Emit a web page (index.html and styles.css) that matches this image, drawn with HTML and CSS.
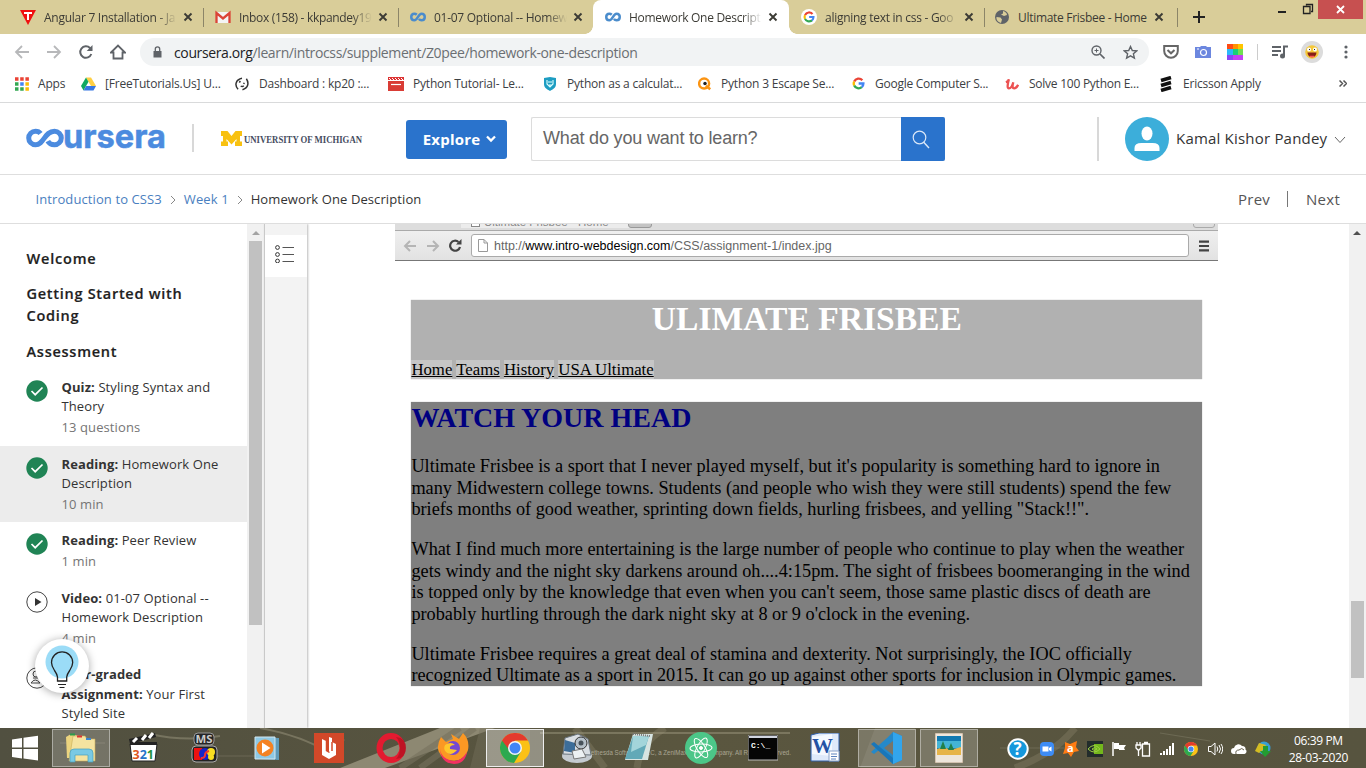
FILE: index.html
```html
<!DOCTYPE html>
<html lang="en">
<head>
<meta charset="utf-8">
<title>Homework One Description | Coursera</title>
<link rel="stylesheet" href="styles.css">
</head>
<body>
<svg class="defs" width="0" height="0">
  <symbol id="close" viewBox="0 0 10 10"><path d="M1.500 1.500l7 7m0-7l-7 7" stroke="#3c3b35" stroke-width="1.900" fill="none"/></symbol>
  <symbol id="loop" viewBox="0 0 32 18"><path d="M13.500 4.500C11.500 2.600 10 2.500 8.800 2.500C5 2.500 2.500 5.400 2.500 9S5 15.500 8.800 15.500C15 15.500 16.500 2.500 23 2.500C26.800 2.500 29.500 5.400 29.500 9S26.800 15.500 23 15.500C20.500 15.500 19 14.600 17.700 13" fill="none" stroke="currentColor" stroke-width="5"/></symbol>
  <symbol id="google" viewBox="0 0 16 16" fill="none" stroke-width="2.900"><path d="M12.700 4A6 6 0 0 0 2.700 5.500" stroke="#ea4335"/><path d="M2.700 5.500a6 6 0 0 0 0 5" stroke="#fbbc05"/><path d="M2.700 10.500a6 6 0 0 0 9.300 2" stroke="#34a853"/><path d="M12 12.500A6 6 0 0 0 14 8H8.200" stroke="#4285f4"/></symbol>
  <symbol id="chrome" viewBox="0 0 30 30"><circle cx="15" cy="15" r="15" fill="#fbc116"/><path d="M2 7.500A15 15 0 0 0 14 30L21 18.500 15 15z" fill="#2da94f"/><path d="M2 7.500A15 15 0 0 1 28 7.500H15L8.500 16z" fill="#e33b2e"/><circle cx="15" cy="15" r="7" fill="#f5f5f5"/><circle cx="15" cy="15" r="5.500" fill="#4285f4"/></symbol>
  <symbol id="done" viewBox="0 0 22 22"><circle cx="11" cy="11" r="10.700" fill="#208455"/><path d="M5.500 11l3.700 3.700L16.500 7.500" fill="none" stroke="#fff" stroke-width="1.700"/></symbol>
</svg>

<div class="tabs">
  <div class="tab"><svg class="fav" viewBox="0 0 16 16"><path d="M0 1h16L8 16z" fill="#f01010"/><path d="M4 4h8M8 4v7" stroke="#fff" stroke-width="2"/></svg><span class="ttl">Angular 7 Installation - Ja</span><svg class="x"><use href="#close"/></svg></div>
  <div class="tab sep"><svg class="fav" viewBox="0 0 16 16"><path d="M1 3h14v11H1z" fill="#f4f4f4"/><path d="M1.500 14V4L8 9.500 14.500 4v10" fill="none" stroke="#db4437" stroke-width="2.300"/></svg><span class="ttl t158">Inbox (158) - kkpandey19</span><svg class="x"><use href="#close"/></svg></div>
  <div class="tab sep"><svg class="fav blue"><use href="#loop"/></svg><span class="ttl">01-07 Optional -- Homew</span><svg class="x"><use href="#close"/></svg></div>
  <div class="tab active"><svg class="fav blue"><use href="#loop"/></svg><span class="ttl">Homework One Descript</span><svg class="x"><use href="#close"/></svg></div>
  <div class="tab"><svg class="fav round"><use href="#google"/></svg><span class="ttl">aligning text in css - Goo</span><svg class="x"><use href="#close"/></svg></div>
  <div class="tab sep last"><svg class="fav" viewBox="0 0 16 16"><circle cx="8" cy="8" r="7" fill="#5f6368"/><path d="M2.500 8l4 .5 1.500 2-1 3.500C4 13 2 11 2.500 8zM9 2c2 .5 4 2 4 4l-3 1-3-1.500 2-1z" fill="#d9cd99"/></svg><span class="ttl full">Ultimate Frisbee - Home</span><svg class="x"><use href="#close"/></svg></div>
  <div class="newtab"><svg width="12" height="12"><path d="M6 0v12M0 6h12" stroke="#222" stroke-width="2"/></svg></div>
  <svg class="winbtns" width="60" height="20"><path d="M4 12h8" stroke="#222" stroke-width="2"/><path d="M32.500 5.500v-1h6v7h-1.500M29.500 6.500h6.500v7h-6.500z" fill="none" stroke="#222" stroke-width="1.300"/></svg>
  <div class="winclose"><svg width="9" height="9"><path d="M1 1l7 7m0-7L1 8" stroke="#fff" stroke-width="1.800"/></svg></div>
</div>

<div class="toolbar">
  <svg class="nav" viewBox="0 0 16 16"><path d="M15 8H2m6-6L2 8l6 6" stroke="#b7b8ba"/></svg>
  <svg class="nav" viewBox="0 0 16 16"><path d="M1 8h13M8 2l6 6-6 6" stroke="#b7b8ba"/></svg>
  <svg class="nav" viewBox="0 0 16 16"><path d="M13.300 10A5.700 5.700 0 1 1 12 4l1.500 2" stroke-width="2"/><path d="M14.500 1v6H8.700z" fill="#5f6368" stroke="none"/></svg>
  <svg class="nav" viewBox="0 0 16 16"><path d="M1 8.500L8 1.500l7 7h-2.500v6h-9v-6z" stroke-width="1.800"/></svg>
  <div class="omni">
    <svg width="9" height="12" viewBox="0 0 9 12"><path d="M.5 5h8v6.500h-8z" fill="#5f6368"/><path d="M2.300 5V3a2.200 2.200 0 0 1 4.400 0v2" fill="none" stroke="#5f6368" stroke-width="1.300"/></svg>
    <span class="url"><b>coursera.org</b>/learn/introcss/supplement/Z0pee/homework-one-description</span>
    <svg class="zm" width="14" height="14" viewBox="0 0 14 14" fill="none" stroke="#5f6368"><circle cx="5.500" cy="5.500" r="4.500" stroke-width="1.400"/><path d="M9 9l4.500 4.500" stroke-width="1.700"/><path d="M3.500 5.500h4m-2-2v4"/></svg>
    <svg width="15" height="15" viewBox="0 0 15 15"><path d="M7.500 1.500l1.800 4 4.400.4-3.300 2.900 1 4.300-3.900-2.300-3.900 2.300 1-4.300L1.300 5.900l4.400-.4z" fill="none" stroke="#5f6368" stroke-width="1.400"/></svg>
  </div>
  <div class="ext">
    <svg width="16" height="16"><path d="M1.200 2h13.600v5a6.800 6.800 0 0 1-13.600 0z" fill="none" stroke="#666" stroke-width="2"/><path d="M4.500 6L8 9.300 11.500 6" fill="none" stroke="#666" stroke-width="2"/></svg>
    <svg width="16" height="16"><path d="M0 3h5l1-1h5l1 1h4v11H0z" fill="#6c87df"/><circle cx="8.500" cy="8.500" r="3" fill="none" stroke="#fff" stroke-width="1.200"/><path d="M2 5h2" stroke="#fff"/></svg>
    <svg width="16" height="16"><path d="M0 0h6v5H0z" fill="#ff4b14"/><path d="M6 0h5v5H6z" fill="#ff9100"/><path d="M11 0h5v5h-5z" fill="#ffc400"/><path d="M0 5h6v6H0z" fill="#2bb8fa"/><path d="M6 5h5v6H6z" fill="#18cf78"/><path d="M11 5h5v6h-5z" fill="#72df52"/><path d="M0 11h6v5H0z" fill="#8947f5"/><path d="M6 11h10v5H6z" fill="#c441f5"/></svg>
    <i class="bar"></i>
    <svg width="16" height="14"><path d="M0 2h9M0 6h9M0 10h6" stroke="#5f6368" stroke-width="1.800"/><path d="M12 11V1.500h4" fill="none" stroke="#5f6368" stroke-width="2"/><circle cx="10.500" cy="11" r="2.500" fill="#5f6368"/></svg>
    <svg class="face" width="22" height="22"><circle cx="11" cy="11" r="11" fill="#dcdcdc"/><circle cx="11" cy="11" r="6.800" fill="#f5c93c"/><circle cx="8" cy="8.500" r="2" fill="#fff"/><circle cx="14" cy="8.500" r="2" fill="#fff"/><path d="M8 8.500h1m4 0h1" stroke="#222"/><path d="M6.500 11.500h9a4.500 4.800 0 0 1-9 0z" fill="#872016"/><path d="M9 15.500h4" stroke="#f55" stroke-width="1.500"/></svg>
    <svg class="dots" width="4" height="14" fill="#5f6368"><circle cx="2" cy="2" r="1.600"/><circle cx="2" cy="7" r="1.600"/><circle cx="2" cy="12" r="1.600"/></svg>
  </div>
</div>

<div class="marks">
  <div class="mark m1"><svg viewBox="0 0 14 14"><path d="M0 2h14" stroke="#ea4335" stroke-width="3.500" stroke-dasharray="3.500 1.700"/><path d="M0 7h3.500" stroke="#34a853" stroke-width="3.500"/><path d="M5.200 7h3.500" stroke="#4285f4" stroke-width="3.500"/><path d="M10.400 7h3.500" stroke="#fbbc05" stroke-width="3.500"/><path d="M0 12h8.700" stroke="#34a853" stroke-width="3.500" stroke-dasharray="3.500 1.700"/><path d="M10.400 12h3.500" stroke="#fbbc05" stroke-width="3.500"/></svg><span>Apps</span></div>
  <div class="mark m2"><svg viewBox="0 0 16 14"><path d="M5.300 0h5.400L16 9h-5.300z" fill="#ffcf43"/><path d="M5.300 0L0 9l2.700 5L8 4.500z" fill="#11a861"/><path d="M2.700 14L5.500 9H16l-2.700 5z" fill="#3777e3"/></svg><span>[FreeTutorials.Us] U...</span></div>
  <div class="mark m3"><svg viewBox="0 0 16 16" fill="none" stroke="#333"><path d="M8 1.500C1 3 -1 9 3.500 14M8.500 14.500c7-2 7.500-8 4.500-12.500" stroke-width="1.700"/><path d="M6 4.500L5 6.500M10.500 6.500l-.5 1.500M6.500 10.500q2 1 3.500-.5" stroke-width="1.700"/></svg><span>Dashboard : kp20 :...</span></div>
  <div class="mark m4"><svg viewBox="0 0 16 16"><path d="M0 1h16v3H0z" fill="#d33"/><path d="M1 2l2 2m1-2l2 2m1-2l2 2m1-2l2 2m1-2l2 2" stroke="#fff"/><path d="M0 5h16v10H0z" fill="#d93c35"/><path d="M3 8.500h10" stroke="#fff" stroke-width="1.200"/></svg><span>Python Tutorial- Le...</span></div>
  <div class="mark m5"><svg viewBox="0 0 12 14"><path d="M0 1l6-1 6 1v6c0 4-3 5-6 7-3-2-6-3-6-7z" fill="#1d9dc2"/><path d="M3 3v4l3 3 3-3V3M4 5h4M5 8h3" fill="none" stroke="#dff" stroke-width="1.100"/></svg><span>Python as a calculat...</span></div>
  <div class="mark m6"><svg viewBox="0 0 16 16"><circle cx="7" cy="7.500" r="5.700" fill="none" stroke="#fb9413" stroke-width="2.800"/><circle cx="8" cy="7.500" r="2" fill="#222"/><path d="M9 10l5 4" stroke="#fb9413" stroke-width="3"/></svg><span>Python 3 Escape Se...</span></div>
  <div class="mark m7"><svg viewBox="0 0 16 16"><use href="#google" width="16" height="16"/></svg><span>Google Computer S...</span></div>
  <div class="mark m8"><svg viewBox="0 0 16 14"><path d="M1 5q3-1 3.500-3.500Q1.500 12 4.500 12T9.500 5Q7.500 12 10.500 12 13 12 15 8" fill="none" stroke="#ec5252" stroke-width="2.600"/></svg><span>Solve 100 Python E...</span></div>
  <div class="mark m9"><svg viewBox="0 0 14 16"><path d="M2 4.500l10-3M2 9.500l10-3M2 14.500l10-3" stroke="#111" stroke-width="3.500"/></svg><span>Ericsson Apply</span></div>
  <svg class="more" width="8" height="7"><path d="M.5.5l3 3-3 3m4-6l3 3-3 3" fill="none" stroke="#555" stroke-width="1.500"/></svg>
</div>

<header class="head">
  <svg class="logo" width="142" height="28"><path d="M14.500 8.500C13.200 6.600 11.800 6.200 9.500 6.200A6.800 6.800 0 0 0 9.500 19.800C18 19.800 18.500 6.200 28.500 6.200A6.800 6.800 0 0 1 28.500 19.800C25 19.800 23 18.500 21.800 16.200" fill="none" stroke="#4c8bdf" stroke-width="5"/><text x="37" y="22.500" textLength="103" lengthAdjust="spacingAndGlyphs">ursera</text></svg>
  <i class="vline a"></i>
  <svg class="mich" width="146" height="20"><path d="M0 2h6.500l4 5 4-5H21v5h-2v5.500h2V17h-7v-4.500h1.500V10l-5 5.500-5-5.500v2.500H7V17H0v-4.500h2V7H0z" fill="#f8c111"/><text x="23" y="13.500" textLength="118" lengthAdjust="spacingAndGlyphs">UNIVERSITY OF MICHIGAN</text></svg>
  <button class="explore">Explore<svg width="10" height="8"><path d="M1 1.500l4 4 4-4" fill="none" stroke="#fff" stroke-width="2.300"/></svg></button>
  <div class="search"><span>What do you want to learn?</span><div class="go"><svg width="18" height="19"><circle cx="7.500" cy="7.500" r="6.300" fill="none" stroke="#dbe8f8" stroke-width="1.200"/><path d="M11.500 12l5.500 6" stroke="#dbe8f8" stroke-width="1.400"/></svg></div></div>
  <i class="vline b"></i>
  <svg class="avatar" width="44" height="44"><circle cx="22" cy="22" r="22" fill="#3caeda"/><ellipse cx="22" cy="16.500" rx="5.500" ry="7" fill="#fff"/><path d="M9.500 34v-3q0-5 7-5h11q7 0 7 5v3z" fill="#fff"/></svg>
  <span class="user">Kamal Kishor Pandey</span>
  <svg class="ucar" width="12" height="8"><path d="M1 1l5 5.500L11 1" fill="none" stroke="#666"/></svg>
</header>

<nav class="crumbs">
  <a class="c1">Introduction to CSS3</a><svg width="6" height="10"><path d="M1 1l4 4-4 4" fill="none" stroke="#888"/></svg><a class="c2">Week 1</a><svg width="6" height="10"><path d="M1 1l4 4-4 4" fill="none" stroke="#888"/></svg><span class="c3">Homework One Description</span>
  <span class="prev">Prev</span><i class="pn"></i><span class="next">Next</span>
</nav>

<main class="main">
  <aside class="side">
    <h3>Welcome</h3><h3>Getting Started with<br>Coding</h3><h3>Assessment</h3>
    <div class="item"><svg class="st"><use href="#done"/></svg><div><b>Quiz:</b> Styling Syntax and<br>Theory<p>13 questions</p></div></div>
    <div class="item on"><svg class="st"><use href="#done"/></svg><div><b>Reading:</b> Homework One<br>Description<p>10 min</p></div></div>
    <div class="item"><svg class="st"><use href="#done"/></svg><div><b>Reading:</b> Peer Review<p>1 min</p></div></div>
    <div class="item"><svg class="st" viewBox="0 0 22 22"><circle cx="11" cy="11" r="10.200" fill="none" stroke="#444"/><path d="M9 7l6.500 4L9 15z" fill="#333"/></svg><div><b>Video:</b> 01-07 Optional --<br>Homework Description<p>4 min</p></div></div>
    <div class="item"><svg class="st" viewBox="0 0 22 22" fill="none" stroke="#444"><circle cx="11" cy="11" r="10.200"/><circle cx="10" cy="7" r="3"/><path d="M5 16q4-6 9 0zM7 11h5"/></svg><div><b>Peer-graded</b><br><b>Assignment:</b> Your First<br>Styled Site</div></div>
    <div class="bulb"><svg width="54" height="54"><circle cx="27" cy="23" r="16.500" fill="#9bdcf7"/><path d="M22.500 42v-4q-.5-3-3-6.500c-2-3-3-5-3-8a10.600 10.600 0 0 1 21.200 0c0 3-1 5-3 8q-2.500 3.500-3 6.500v4z" fill="none" stroke="#222" stroke-width="1.300"/><path d="M23 45.500h8M24.500 48.500h5" stroke="#222"/></svg></div>
  </aside>
  <div class="sb sb1"><i class="up"></i><i class="thumb"></i></div>
  <div class="strip"><div><svg width="20" height="18" fill="none" stroke="#333"><circle cx="2.500" cy="2.500" r="1.900"/><circle cx="2.500" cy="9.500" r="1.900"/><circle cx="2.500" cy="16" r="1.900"/><path d="M7.500 2.500H19M7.500 9.500H19M7.500 16.500H19" stroke="#555"/></svg></div></div>
  <section class="content">
    <div class="mac">
      <div class="mactabs"><span>Ultimate Frisbee - Home</span><i class="pg"></i><i class="t1"></i><i class="t2"></i></div>
      <div class="macbar">
        <svg width="14" height="12"><path d="M13 6H2m5-5L2 6l5 5" fill="none" stroke="#b5b5b5" stroke-width="2"/></svg>
        <svg width="14" height="12"><path d="M1 6h11M7 1l5 5-5 5" fill="none" stroke="#b5b5b5" stroke-width="2"/></svg>
        <svg width="13" height="13" viewBox="0 0 13 13"><path d="M11 8a5 5 0 1 1-1.500-5" fill="none" stroke="#444" stroke-width="2.200"/><path d="M12.500 0v5.500H7z" fill="#444"/></svg>
        <div class="macurl"><svg width="10" height="13"><path d="M.5.500h5.500l3.500 3.500v8.500h-9zM6 .5V4h3.500" fill="#fff" stroke="#999"/></svg><span>http://<b>www.intro-webdesign.com</b>/CSS/assignment-1/index.jpg</span></div>
        <svg width="12" height="12"><path d="M1 1.700h10M1 6h10M1 10.300h10" stroke="#444" stroke-width="2.200"/></svg>
      </div>
    </div>
    <div class="fr-head"><h1>ULIMATE FRISBEE</h1><div class="links"><a>Home</a> <a>Teams</a> <a>History</a> <a>USA Ultimate</a></div></div>
    <div class="fr-body"><h2>WATCH YOUR HEAD</h2>
      <p>Ultimate Frisbee is a sport that I never played myself, but it's popularity is something hard to ignore in<br>many Midwestern college towns. Students (and people who wish they were still students) spend the few<br>briefs months of good weather, sprinting down fields, hurling frisbees, and yelling "Stack!!".</p>
      <p>What I find much more entertaining is the large number of people who continue to play when the weather<br>gets windy and the night sky darkens around oh....4:15pm. The sight of frisbees boomeranging in the wind<br>is topped only by the knowledge that even when you can't seem, those same plastic discs of death are<br>probably hurtling through the dark night sky at 8 or 9 o'clock in the evening.</p>
      <p>Ultimate Frisbee requires a great deal of stamina and dexterity. Not surprisingly, the IOC officially<br>recognized Ultimate as a sport in 2015. It can go up against other sports for inclusion in Olympic games.</p>
    </div>
  </section>
  <div class="sb sb2"><i class="up"></i><i class="thumb"></i></div>
</main>

<footer class="task">
  <svg class="texture" width="1366" height="40" fill="none"><path d="M340 40L440 0h55L385 40z" fill="#aaa48e" opacity=".65"/><path d="M400 40l60-40M420 40l55-40" stroke="#77725e" stroke-width="6" opacity=".6"/><path d="M260 0q40 7 70 25M150 6q35 8 70 2M540 5h250" stroke="#aca78e" stroke-width="2" opacity=".4"/><path d="M575 0l30 40M665 0q-25 15-28 40M1075 0q-20 25-60 40" stroke="#a39a80" stroke-width="7" opacity=".25"/><path d="M480 0h50v40h-60zM875 0h40v40h-55z" fill="#77735f" opacity=".4"/><path d="M60 15h45M210 28h55M320 12h25M1000 20h75M1160 5l50 8" stroke="#8d8973" opacity=".4"/><text x="565" y="27" textLength="226" lengthAdjust="spacingAndGlyphs">© 2012 Bethesda Softworks LLC, a ZeniMax Media company. All Rights Reserved.</text></svg>
  <div class="start"><svg width="28" height="26"><path d="M0 4.500L10 3v9.500H0zM11.500 2.800L26 .8v11.700H11.500zM0 14h10v9.500L0 22zM11.500 14H26v11.500l-14.500-2z" fill="#fff"/></svg></div>
  <div class="cell box"><svg width="34" height="32"><path d="M2 5l5-3 8 2v22H3z" fill="#ecd47f"/><path d="M9 4h12l2 3h8v22H5z" fill="#f5e3a0" stroke="#c9ad58" stroke-width=".6"/><path d="M6 2.500h5" stroke="#2b9b4a" stroke-width="2"/><path d="M13 4.500h5" stroke="#d33" stroke-width="2"/><path d="M22 7h5" stroke="#3a85d0" stroke-width="2"/><path d="M6 30v-9q0-4 4-4h15q4 0 4 4v9h-5v-7H11v7z" fill="#79c9e4" stroke="#479dbc" stroke-width=".7"/></svg></div>
  <div class="cell"><svg width="30" height="32"><path d="M2 12h27l-2 17H4z" fill="#fff" stroke="#222"/><path d="M1 7l26-6 1 4-26 7zM2 10h27v3H2z" fill="#222"/><path d="M5 10l4-4m5 2l4-5m3 3l4-5" stroke="#fff" stroke-width="3"/><text x="4.500" y="26.500" class="n321"><tspan fill="#e0581d">3</tspan><tspan fill="#2473c9">2</tspan><tspan fill="#249442">1</tspan></text></svg></div>
  <div class="cell"><svg width="28" height="32"><rect x="3" y="1" width="20" height="12" rx="4" fill="#252525" stroke="#999"/><text x="4.500" y="11" class="ms" textLength="17" lengthAdjust="spacingAndGlyphs">MS</text><rect x="1" y="14" width="25" height="16" rx="4" fill="#222" stroke="#aaa"/><path d="M3 16h8q5 6 0 12H3z" fill="#e11"/><circle cx="14" cy="22" r="6" fill="#1424ca"/><circle cx="20" cy="20" r="4" fill="#f8de22"/><circle cx="20" cy="25" r="3" fill="#f8de22"/><path d="M10 26q4 0 4-3t4-4" stroke="#e33" stroke-width="2" fill="none"/></svg></div>
  <div class="cell"><svg width="28" height="28"><path d="M6 3l20 1v22l-20-1z" fill="#5f9bb9"/><path d="M2 3h20v22H2z" fill="#8ec9e5" stroke="#d4e8f1"/><circle cx="12" cy="14" r="8.500" fill="#f48222"/><path d="M9 8.500l8.500 5.500L9 19.500z" fill="#fff"/></svg></div>
  <div class="cell"><svg width="30" height="30"><path d="M0 0h30v30H0z" fill="#d24829"/><path d="M8 6l4 2v9l3 2V4l3 1v4l4 2v11l-7 4-7-4z" fill="#fff"/><path d="M12.500 8v9.500l3 2M18 9v9" stroke="#d24829" stroke-width="1.500" fill="none"/></svg></div>
  <div class="cell"><svg width="30" height="30"><ellipse cx="15" cy="15" rx="11.500" ry="12" fill="none" stroke="#e31b30" stroke-width="6"/><path d="M20 4q4 4 4 11t-4 11q10-1 10-11T20 4z" fill="#ae1020" opacity=".7"/></svg></div>
  <div class="cell"><svg width="32" height="32"><path d="M4 5l5 5 7-3-2-5 8 5 4-6q7 7 5 17a15 13 0 0 1-29 2Q-1 14 4 5z" fill="#fb9824"/><path d="M3 13q-1 10 7 14 12 6 20-7-2 12-13 12Q2 31 3 13z" fill="#f33161"/><circle cx="16" cy="16" r="7" fill="#7549d1"/><path d="M8 13q6-4 10 0-6 0-5 4l7 1q-6 7-11 2-3-3-1-7z" fill="#ffc72b"/></svg></div>
  <div class="cell box lit"><svg width="30" height="30"><use href="#chrome"/></svg></div>
  <div class="cell"><svg width="34" height="32"><ellipse cx="17" cy="24" rx="15" ry="7" fill="#c5cbd1"/><path d="M3 22L5 6l13-4 10 5 3 16z" fill="#d9dee3" stroke="#69747e"/><path d="M5 8l10 3v10L4 19z" fill="#3c6d99"/><circle cx="21" cy="11" r="6" fill="#b5c0c9" stroke="#333"/><circle cx="21" cy="11" r="2.500" fill="#47525b"/><path d="M12 19l10-2 4 8-12 2z" fill="#edf1f3" stroke="#777"/></svg></div>
  <div class="cell"><svg width="32" height="30"><path d="M10 1h20l-5 26H2z" fill="#d7e4e1"/><path d="M10 3h16l-7 23H2z" fill="#62a9b7"/><path d="M10 3h16l-3 9-15 7z" fill="#a3d5da"/><path d="M10 1l17 2" stroke="#777" stroke-width="2" stroke-dasharray="1 1"/></svg></div>
  <div class="cell"><svg width="32" height="32" fill="none" stroke="#fff"><circle cx="16" cy="16" r="16" fill="#4cc688" stroke="none"/><ellipse cx="16" cy="16" rx="4" ry="11" transform="rotate(28 16 16)"/><ellipse cx="16" cy="16" rx="4" ry="11" transform="rotate(-32 16 16)"/><ellipse cx="16" cy="16" rx="4" ry="11" transform="rotate(88 16 16)"/><circle cx="16" cy="16" r="1.500" fill="#fff"/></svg></div>
  <div class="cell"><svg width="30" height="26"><path d="M0 0h30v25H0z" fill="#050505" stroke="#bbb"/><path d="M1 2h28" stroke="#d0d4df" stroke-width="2"/><text x="3" y="13" class="cmd">C:\_</text></svg></div>
  <div class="cell"><svg width="30" height="30"><path d="M1 2l8-2h20v28H1z" fill="#dfeafa" stroke="#2f5ea9"/><path d="M2 4l20-3v22L2 21z" fill="#f5f9ff"/><text x="2" y="20" class="word" textLength="21" lengthAdjust="spacingAndGlyphs">W</text><path d="M19 18h10v10H19z" fill="#fff" stroke="#8aa3c9"/><path d="M21 21h6m-6 2.500h6m-6 2.500h5" stroke="#5c83bd"/></svg></div>
  <div class="cell box"><svg width="32" height="32"><path d="M22 0l9 4v24l-9 4L8 18l-5 4-3-2 16-14z" fill="#2489ca"/><path d="M22 0l9 4v24l-9 4z" fill="#32a5ec"/><path d="M22 9v14l-9-7z" fill="#77756a"/><path d="M3 10l19 16v6L0 12z" fill="#1976b9"/></svg></div>
  <div class="cell box"><svg width="28" height="30"><path d="M0 0h28v30H0z" fill="#eee6dc" stroke="#b79f84"/><path d="M2 3h24v19H2z" fill="#1179b1"/><path d="M2 8h24v7H2z" fill="#44b4d5"/><path d="M2 16q8-3 13 1l11-3v8H2z" fill="#e6b449"/><path d="M8 8l3 8H5zM16 10l3 7h-6z" fill="#22804b"/></svg></div>
  <div class="tray">
    <svg viewBox="0 0 22 22" class="big"><circle cx="11" cy="11" r="9.700" fill="#1598dc" stroke="#fff" stroke-width="2"/><text x="6.500" y="17" class="q">?</text></svg>
    <svg viewBox="0 0 16 16"><rect x="1" y="1" width="14" height="14" rx="4" fill="#3d8cf5"/><path d="M3.500 5.500h6v5h-6zM10 7l2.500-1.500v5L10 9z" fill="#fff"/></svg>
    <svg viewBox="0 0 16 16"><path d="M2 1l5 2 7-3-1 6 3 4-5 1-3 5-3-4-5 1 2-6z" fill="#ff7c14"/><text x="4" y="11" class="av">a</text></svg>
    <svg viewBox="0 0 16 16"><path d="M0 0h16v16H0z" fill="#222c2b"/><path d="M7 3h9v10H7z" fill="#73b71b"/><path d="M1 8q6-7 12 0-6 6-12 0zm4 0q3-3 5 0-3 3-5 0z" fill="none" stroke="#9bce44"/></svg>
    <svg viewBox="0 0 16 16"><path d="M2 1v14" stroke="#fff" stroke-width="1.500"/><path d="M3 2h5v2h7l-2 3 1 2H8V8H3z" fill="#fff"/></svg>
    <svg viewBox="0 0 16 16" fill="none" stroke="#fff" stroke-width="1.300"><path d="M7.500 3h7v12h-7zM9 1.500h4M3.500 9v6M1 4h5v3l-2 2H3L1 7zM2 4V1m3 3V1"/></svg>
    <svg viewBox="0 0 16 16" stroke="#fff" stroke-width="2"><path d="M2 14v-2M5 14v-4M8 14V8M11 14V5M14 14V2"/></svg>
    <svg viewBox="0 0 16 16"><use href="#chrome" x="1" y="1" width="14" height="14"/></svg>
    <svg viewBox="0 0 16 16" fill="none" stroke="#fff"><path d="M1.500 5.500H4L8 2v12l-4-3.500H1.500zM10 5.500q1.500 2.500 0 5M12 4q3 4 0 8M14 3q3.500 5 0 10"/></svg>
    <svg viewBox="0 0 16 16"><path d="M3 13a3 3 0 0 1 0-6 4.500 4.500 0 0 1 8-2q4 0 3.500 3.500a2.500 2.500 0 0 1-1 4.500z" fill="#fff"/><path d="M5 13q-1-4 3-4 3-3 5 0" fill="none" stroke="#66624f"/></svg>
    <svg viewBox="0 0 16 16"><circle cx="9" cy="7" r="6.500" fill="#369fd5"/><path d="M4 2l7 2-3 5-4 3-4-2z" fill="#d4bc22"/><path d="M8 5h5v5h3l-6 6-5-6h3z" fill="#239c32"/></svg>
  </div>
  <div class="clock"><span>06:39 PM</span><span>28-03-2020</span></div>
</footer>
</body>
</html>
```
FILE: styles.css
```css
* { box-sizing: border-box; }
body { margin: 0; width: 1366px; height: 768px; overflow: hidden; background: #fff; font-family: "Open Sans", sans-serif; color: #333; display: flex; flex-direction: column; }
svg { flex: none; display: block; }
.defs { position: absolute; }
span, a { white-space: nowrap; }

.tabs { height: 34px; background: #d9cd99; display: flex; align-items: stretch; padding: 0 3px 0 8px; flex: none; }
.tab { width: 195px; flex: none; display: flex; align-items: center; padding: 0 10px 0 12px; position: relative; }
.tab.sep::before, .newtab::before { content: ""; position: absolute; left: 0; top: 8px; width: 1px; height: 19px; background: #8c8568; }
.tab.last { width: 193px; padding-left: 10px; }
.fav { width: 16px; height: 16px; margin-right: 8px; }
.blue { color: #4a8ccc; }
.round { background: #fff; border-radius: 50%; padding: 2px; }
.ttl { width: 133px; font-size: 12px; letter-spacing: -.27px; color: #3c3b35; -webkit-mask-image: linear-gradient(90deg, #000 85%, transparent); mask-image: linear-gradient(90deg, #000 85%, transparent); }
.t158 { letter-spacing: -.32px; }
.ttl.full { -webkit-mask-image: none; mask-image: none; letter-spacing: -.3px; width: 130px; }
.x { width: 10px; height: 10px; margin-left: 6px; }
.tab.active { background: #fff; border-radius: 8px 8px 0 0; width: 196px; }
.tab.active .ttl { letter-spacing: -.3px; }
.tab.active::before, .tab.active::after { content: ""; position: absolute; bottom: 0; width: 8px; height: 8px; }
.tab.active::before { left: -8px; background: radial-gradient(circle at 0 0, transparent 7.5px, #fff 8px); }
.tab.active::after { right: -8px; background: radial-gradient(circle at 100% 0, transparent 7.5px, #fff 8px); }
.newtab { position: relative; width: 50px; padding-left: 16px; display: flex; align-items: center; }
.winbtns { margin-left: auto; }
.winclose { margin-left: -16px; width: 45px; height: 19px; background: #c75050; display: flex; align-items: center; justify-content: center; }

.toolbar { height: 38px; flex: none; display: flex; align-items: center; padding: 0 0 2px 14px; }
.nav { width: 16px; height: 16px; margin-right: 16px; fill: none; stroke: #5f6368; stroke-width: 1.8; }
.nav:nth-child(4) { margin-right: 14px; }
.omni { width: 1009px; flex: none; height: 28px; border-radius: 14px; background: #f1f3f4; display: flex; align-items: center; padding: 0 11px 0 13px; }
.url { margin-left: 12px; font-size: 14px; color: #6b6f73; letter-spacing: -.37px; }
.url b { font-weight: 400; color: #202124; }
.zm { margin-left: auto; margin-right: 18px; }
.ext { display: flex; align-items: center; padding-left: 14px; }
.ext svg { margin-right: 16px; }
.bar { width: 1px; height: 16px; background: #ccc; margin: 0 14px 0 -2px; }
.ext .face { margin-right: 21px; margin-left: -3px; }
.ext .dots { margin: 0; }

.marks { height: 31px; flex: none; border-bottom: 1px solid #d9dadb; display: flex; align-items: center; padding: 0 19px 7px 15px; }
.mark { display: flex; align-items: center; flex: none; font-size: 12px; letter-spacing: -.2px; color: #3c4043; }
.mark svg { width: 14px; height: 14px; margin-right: 9px; }
.m1 { width: 66px; }
.m2 { width: 154px; }
.m2 svg { width: 15px; }
.m3 { width: 153px; }
.m3 svg { margin-right: 10px; }
.m4 { width: 155px; }
.m4 svg { width: 16px; height: 16px; }
.m5 { width: 154px; }
.m5 svg { width: 12px; margin-right: 12px; margin-left: 1px; }
.m5 span { margin-left: -1px; }
.m6 { width: 155px; }
.m6 svg { margin-left: 1px; }
.m7 { width: 153px; letter-spacing: -.25px; }
.m7 svg { width: 13px; height: 13px; margin-right: 10px; }
.m8 { width: 154px; }
.m8 span { letter-spacing: -.25px; }
.m8 svg { margin-right: 10px; }
.m9 { letter-spacing: -.22px; }
.m9 svg { margin-right: 10px; height: 16px; }
.more { margin-left: auto; }

.head { height: 72px; flex: none; border-bottom: 1px solid #dedede; display: flex; align-items: center; padding-left: 26px; padding-top: 1px; }
.logo { margin-bottom: 1px; }
.logo text { font: 700 33px Inter, sans-serif; fill: #4c8bdf; stroke: #4c8bdf; stroke-width: .5px; }
.vline { flex: none; width: 1px; background: #d8d8d8; }
.vline.a { height: 28px; width: 2px; margin-left: 24px; margin-bottom: 2px; }
.mich { margin-left: 27px; }
.mich text { font: 700 9.5px "Liberation Serif", serif; fill: #454b60; }
.explore { margin-left: 39px; width: 101px; height: 39px; border: 0; border-radius: 3px; background: #2a73cc; color: #fff; font: 700 15px "Open Sans", sans-serif; letter-spacing: .2px; display: flex; align-items: center; justify-content: center; gap: 6px; padding: 0 0 0 6px; }
.search { margin-left: 24px; width: 414px; height: 44px; border: 1px solid #dcdcdc; border-right: 0; border-radius: 2px; display: flex; align-items: center; font: 18px "Liberation Sans", sans-serif; color: #666; padding-left: 11px; }
.search span { padding-bottom: 2px; letter-spacing: -.18px; }
.go { margin-left: auto; width: 44px; height: 44px; background: #2a73cc; display: flex; align-items: center; justify-content: center; padding-right: 4px; border-radius: 0 2px 2px 0; }
.vline.b { height: 44px; width: 2px; margin-left: 152px; }
.avatar { margin-left: 26px; }
.user { margin-left: 7px; font-size: 15px; letter-spacing: .2px; padding-bottom: 2px; }
.ucar { margin-left: 7px; margin-top: 2px; }

.crumbs { height: 49px; flex: none; border-bottom: 1px solid #dedede; display: flex; align-items: center; padding: 0 26px 0 35.5px; font-size: 13px; letter-spacing: .1px; }
.crumbs a { color: #4a80c0; }
.crumbs svg { margin: 2px 8px 0; }
.prev { margin-left: auto; }
.prev, .next { font-size: 15px; color: #555; letter-spacing: .25px; }
.pn { width: 1px; height: 16px; background: #777; margin: 0 18px 0 17px; }

.main { height: 504px; flex: none; display: flex; overflow: hidden; }
.side { width: 247px; flex: none; padding-top: 24px; position: relative; overflow: hidden; }
.side h3 { margin: 0 0 13px 26.5px; font-size: 14.5px; font-weight: 600; line-height: 22px; letter-spacing: .72px; color: #1f1f1f; -webkit-text-stroke: .2px #1f1f1f; }
.side h3:nth-child(1) { letter-spacing: .8px; }
.side h3:nth-child(2) { margin-bottom: 14px; }
.side h3:nth-child(3) { margin-bottom: 6px; letter-spacing: .75px; }
.item { display: flex; padding: 9px 0 8px 26px; font-size: 13px; line-height: 19.4px; letter-spacing: .1px; white-space: nowrap; }
.item.on { background: #ececec; }
.item p { margin: 1.5px 0 0; color: #757575; }
.st { width: 22px; height: 22px; margin: 2px 13.5px 0 0; }
.bulb { position: absolute; left: 35px; top: 415px; width: 54px; height: 54px; border-radius: 50%; background: #fff; box-shadow: 0 1px 8px rgba(0,0,0,.35); }
.sb { width: 17px; flex: none; background: #f1f1f1; position: relative; }
.up { position: absolute; left: 5px; top: 7px; border: 4px solid transparent; border-top: 0; border-bottom-color: #a3a3a3; }
.thumb { position: absolute; left: 2px; width: 13px; background: #c1c1c1; }
.sb1 .thumb { top: 17px; height: 384px; }
.sb2 .thumb { top: 377px; height: 77px; }
.sb2 .up { left: 4px; border-bottom-color: #505050; }
.strip { width: 43px; margin-right: 1px; flex: none; background: #f3f3f3; border-left: 1px solid #c9c9c9; padding-top: 11px; box-shadow: 1px 0 2px #bbb; z-index: 1; }
.strip div { width: 42px; height: 42px; background: #fff; display: flex; align-items: center; justify-content: center; padding-bottom: 4px; padding-right: 3px; }
.content { flex: 1; padding-left: 87px; }
.mac { width: 823px; height: 37px; border-bottom: 1px solid #777; background: #e9e9e9; }
.mactabs { height: 7px; background: #ddd; border-bottom: 1px solid #aaa; overflow: hidden; position: relative; font: 11.5px/11px "Liberation Sans", sans-serif; color: #888; }
.mactabs span { position: absolute; left: 66px; top: -7px; padding: 0 26px 0 23px; background: #ececec; }
.pg { position: absolute; left: 76px; top: -6px; width: 9px; height: 9px; border: 1px solid #888; background: #fff; }
.t1 { position: absolute; left: 233px; top: -4px; width: 24px; height: 8px; background: #c4c4c4; border: 1px solid #999; border-radius: 3px; }
.t2 { position: absolute; right: 3px; top: -4px; width: 22px; height: 8px; border: 1px solid #aaa; border-radius: 3px; }
.macbar { height: 29px; background: linear-gradient(#efefef, #e2e2e2); display: flex; align-items: center; padding-left: 8px; }
.macbar > svg:nth-child(1), .macbar > svg:nth-child(2) { margin-right: 9px; }
.macurl { margin: 0 9px; width: 718px; height: 23px; border: 1px solid #aaa; border-radius: 3px; background: #fff; display: flex; align-items: center; gap: 6px; padding-left: 6px; font: 12.5px "Liberation Sans", sans-serif; color: #666; }
.macurl b { font-weight: 400; color: #000; }
.fr-head, .fr-body { width: 791px; margin-left: 16.4px; font-family: "Liberation Serif", serif; color: #000; box-shadow: 0 0 1px #aaa; }
.fr-head { margin-top: 39px; height: 79px; background: #b1b1b1; overflow: hidden; }
.fr-head h1 { margin: 0; text-align: center; font-size: 33.6px; line-height: 37px; color: #fff; height: 60px; }
.links { font-size: 16.75px; line-height: 19px; }
.links a { background: #c6c6c6; text-decoration: underline; }
.fr-body { margin-top: 23px; height: 284px; background: #7f7f7f; }
.fr-body h2 { margin: 0; color: #000080; font-size: 28px; line-height: 32px; padding-bottom: 22px; }
.fr-body p { margin: 0 0 18.2px; font-size: 18.27px; line-height: 21.6px; white-space: nowrap; }

.task { height: 40px; flex: none; background: linear-gradient(90deg, #515040, #5a563f 50%, #57543f); display: flex; align-items: center; position: relative; }
.texture { position: absolute; left: 0; top: 0; }
.texture text { font: 7px "Liberation Sans", sans-serif; fill: #aaa694; }
.start { width: 50px; padding-left: 12px; position: relative; }
.cell { width: 58px; height: 38px; margin: 0 2px; flex: none; display: flex; align-items: center; justify-content: center; position: relative; }
.box { background: rgba(255,255,255,.2); border: 1px solid rgba(255,255,255,.4); }
.box.lit { background: rgba(255,255,255,.35); border-color: #eee; }
.n321 { font: 700 12.5px "Open Sans", sans-serif; }
.ms { font: 700 10px "Open Sans", sans-serif; fill: #ccc; }
.cmd { font: 700 8px "Liberation Mono", monospace; fill: #fff; }
.word { font: 700 22px "Liberation Serif", serif; fill: #2452a4; }
.tray { display: flex; align-items: center; margin-left: 27px; gap: 8px; position: relative; padding-top: 1px; }
.tray svg { width: 16px; height: 16px; }
.tray .big { width: 22px; height: 22px; margin-right: 2px; }
.q { font: 700 17px "Open Sans", sans-serif; fill: #fff; }
.av { font: 700 11px "Open Sans", sans-serif; fill: #fff; }
.clock { margin-left: auto; width: 96px; display: flex; flex-direction: column; align-items: center; color: #fff; font-size: 12px; line-height: 17px; letter-spacing: -.35px; position: relative; padding-top: 1px; }
```
